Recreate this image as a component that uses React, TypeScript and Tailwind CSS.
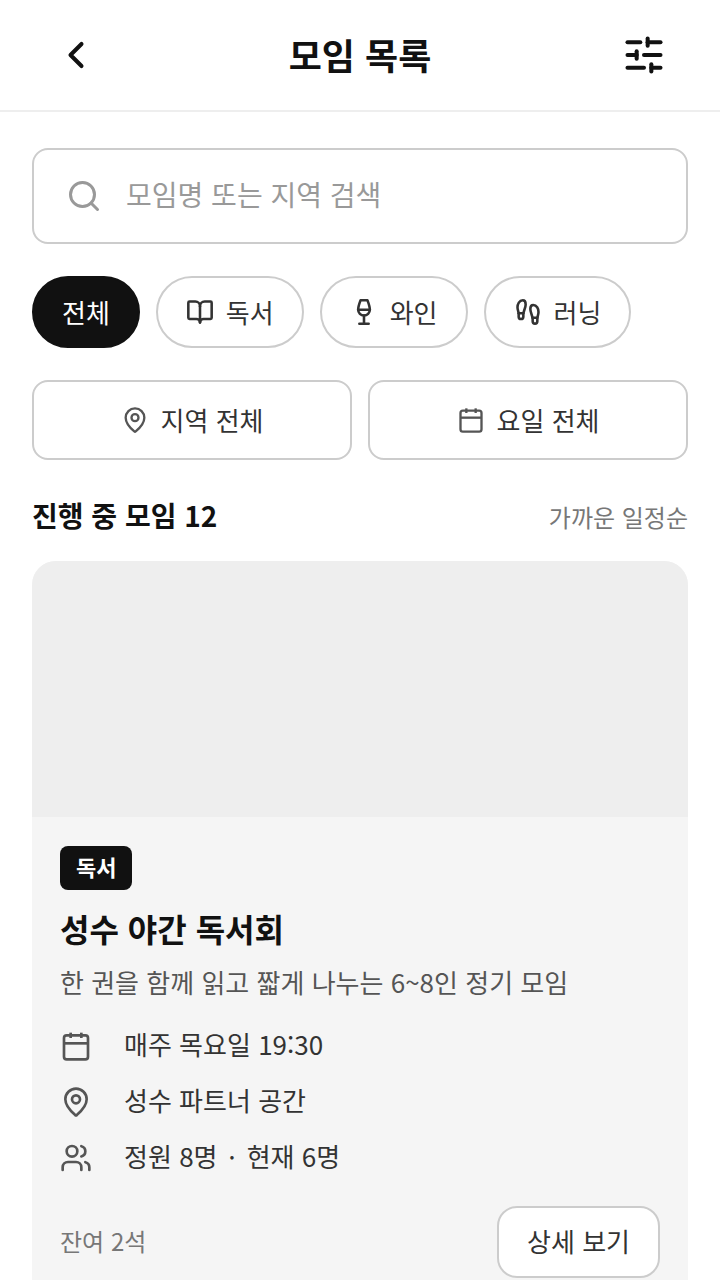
import React from 'react';
import {
  BookOpen,
  Calendar,
  ChevronLeft,
  Footprints,
  MapPin,
  Search,
  SlidersHorizontal,
  Users,
  Wine,
} from 'lucide-react';

interface Meeting {
  category: string;
  title: string;
  description: string;
  schedule: string;
  place: string;
  capacity: number;
  joined: number;
}

const categories = [
  { label: '전체', icon: null },
  { label: '독서', icon: BookOpen },
  { label: '와인', icon: Wine },
  { label: '러닝', icon: Footprints },
];

const meetings: Meeting[] = [
  {
    category: '독서',
    title: '성수 야간 독서회',
    description: '한 권을 함께 읽고 짧게 나누는 6~8인 정기 모임',
    schedule: '매주 목요일 19:30',
    place: '성수 파트너 공간',
    capacity: 8,
    joined: 6,
  },
];

const MeetingCard: React.FC<{ meeting: Meeting }> = ({ meeting }) => {
  return (
    <article className="rounded-3xl overflow-hidden bg-[#f5f5f5]">
      <div className="h-64 bg-[#eeeeee]"></div>
      <div className="px-7 pt-[29px] pb-7">
        <span className="inline-flex h-11 items-center rounded-lg bg-[#111111] px-4 pb-1 text-[22px] font-bold leading-8 text-white">
          {meeting.category}
        </span>
        <h3 className="mt-[15px] text-[32px] leading-[46px] font-bold text-[#111111]">{meeting.title}</h3>
        <p className="mt-[11px] text-[26px] leading-10 text-[#555555]">{meeting.description}</p>
        <ul className="mt-[26px] flex flex-col gap-5 text-[26px] leading-8 text-[#333333]">
          <li className="flex items-center gap-8">
            <Calendar size={32} strokeLinecap="butt" className="text-[#555555]" aria-hidden="true" />
            <span className="pb-1">{meeting.schedule}</span>
          </li>
          <li className="flex items-center gap-8">
            <MapPin size={32} className="text-[#555555]" aria-hidden="true" />
            <span className="pb-1">{meeting.place}</span>
          </li>
          <li className="flex items-center gap-8">
            <Users size={32} className="text-[#555555]" aria-hidden="true" />
            <span className="pb-1">
              정원 {meeting.capacity}명 <span lang="en">·</span> 현재 {meeting.joined}명
            </span>
          </li>
        </ul>
        <div className="mt-[30px] flex items-center justify-between">
          <span className="pb-0.5 text-2xl text-[#777777]">잔여 {meeting.capacity - meeting.joined}석</span>
          <button type="button" className="h-18 rounded-[20px] border-2 border-[#cccccc] bg-white px-7 pb-1 text-[26px] text-[#333333]">
            상세 보기
          </button>
        </div>
      </div>
    </article>
  );
};

const App: React.FC = () => {
  return (
    <div lang="ko" className="min-h-screen bg-white font-['Noto_Sans_CJK_KR',sans-serif] text-[#111111]">
      <header className="flex h-28 items-center justify-between border-b-2 border-[#eeeeee] px-8">
        <button type="button" aria-label="뒤로" className="flex size-22 items-center justify-center">
          <ChevronLeft size={44} strokeWidth={2.2} />
        </button>
        <h1 className="pb-0.5 text-4xl font-bold">모임 목록</h1>
        <button type="button" aria-label="필터" className="flex size-22 items-center justify-center">
          <SlidersHorizontal size={44} strokeWidth={2.2} />
        </button>
      </header>

      <main className="px-8 pt-9">
        <label className="flex h-24 items-center gap-6 rounded-2xl border-2 border-[#cccccc] px-8">
          <Search size={36} className="shrink-0 text-[#999999]" aria-hidden="true" />
          <input
            type="search"
            aria-label="모임 검색"
            placeholder="모임명 또는 지역 검색"
            className="min-w-0 flex-1 pb-1 text-[28px] outline-none placeholder:text-[#999999]"
          />
        </label>

        <div className="mt-8 flex gap-4">
          {categories.map(({ label, icon: Icon }) => (
            <button
              key={label}
              type="button"
              className={`flex h-18 items-center gap-3 rounded-full border-2 px-7 text-[26px] ${
                Icon ? 'border-[#cccccc] text-[#333333]' : 'border-[#111111] bg-[#111111] text-white'
              }`}
            >
              {Icon && <Icon size={28} strokeWidth={2.2} aria-hidden="true" />}
              <span className="pb-0.5">{label}</span>
            </button>
          ))}
        </div>

        <div className="mt-8 grid grid-cols-2 gap-4">
          <button type="button" className="flex h-20 items-center justify-center gap-3 rounded-2xl border-2 border-[#cccccc] text-[26px] text-[#333333]">
            <MapPin size={28} className="text-[#555555]" aria-hidden="true" />
            <span className="pb-0.5">지역 전체</span>
          </button>
          <button type="button" className="flex h-20 items-center justify-center gap-3 rounded-2xl border-2 border-[#cccccc] text-[26px] text-[#333333]">
            <Calendar size={28} strokeLinecap="butt" className="text-[#555555]" aria-hidden="true" />
            <span className="pb-0.5">요일 전체</span>
          </button>
        </div>

        <div className="mt-[35px] mb-[26px] flex items-end justify-between">
          <h2 className="text-[28px] leading-10 font-bold">진행 중 모임 12</h2>
          <span className="text-2xl leading-9 text-[#777777]">가까운 일정순</span>
        </div>

        {meetings.map((meeting) => (
          <MeetingCard key={meeting.title} meeting={meeting} />
        ))}
      </main>
    </div>
  );
};

export default App;
